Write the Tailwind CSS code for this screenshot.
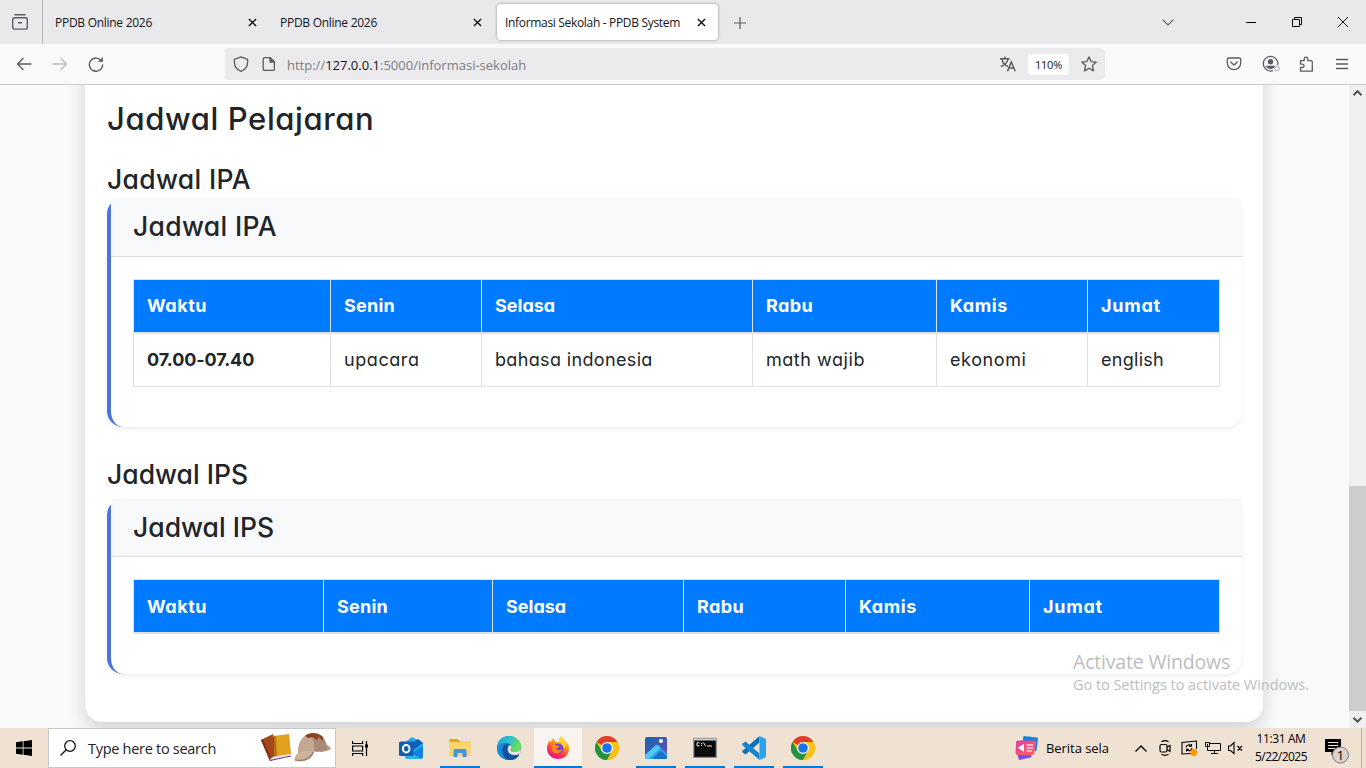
<!DOCTYPE html>
<html lang="id">
<head>
<meta charset="utf-8">
<title>Informasi Sekolah - PPDB System</title>
<script src="https://cdn.jsdelivr.net/npm/@tailwindcss/browser@4"></script>
</head>
<body class="flex h-[768px] w-[1366px] flex-col overflow-hidden bg-[#f8fafc] font-['Open_Sans',sans-serif] text-[#15141a]">

<svg class="hidden">
  <symbol id="close" viewBox="0 0 10 10"><path d="M1 1l8 8M9 1L1 9" fill="none" stroke="#15141a" stroke-width="1.6"/></symbol>
  <symbol id="chrome" viewBox="0 0 24 24">
    <circle cx="12" cy="12" r="12" fill="#fbc116"/>
    <path d="M12 12L1.6 6A12 12 0 0 1 22.4 6z" fill="#e33b2e"/>
    <path d="M1.6 6A12 12 0 0 0 12 24l5.2-9L12 12 6.8 15z" fill="#229342"/>
    <path d="M12 6h10.4A12 12 0 0 1 12 24l5.2-9z" fill="#fbc116"/>
    <circle cx="12" cy="12" r="6" fill="#fff"/><circle cx="12" cy="12" r="4.8" fill="#1a73e8"/>
  </symbol>
</svg>

<!-- Tab strip -->
<header class="flex h-11 shrink-0 items-center bg-[#e9e9eb] text-[12px]">
  <div class="flex h-11 w-[43px] items-center border-r border-[#b5b5b9] pl-3">
    <svg class="h-4 w-4" viewBox="0 0 16 16" fill="none" stroke="#5b5b66" stroke-width="1.4" stroke-linecap="round"><path d="M3 .8h10M6.5 8.8h3"/><rect x=".7" y="3.7" width="14.6" height="11.4" rx="1.8"/></svg>
  </div>
  <div class="flex w-[225px] items-center justify-between pl-3 pr-[11px]"><span class="pt-[2px] tracking-[-0.277px]">PPDB Online 2026</span><svg class="size-[9px]"><use href="#close"/></svg></div>
  <div class="flex w-[225px] items-center justify-between pl-3 pr-[11px]"><span class="pt-[2px] tracking-[-0.277px]">PPDB Online 2026</span><svg class="size-[9px]"><use href="#close"/></svg></div>
  <div class="ml-1 flex h-9 w-[221px] items-center justify-between rounded bg-white pl-2 pr-3 shadow-[0_0_3px_rgba(0,0,0,.4)]"><span class="pt-[2px] tracking-[-0.322px]">Informasi Sekolah - PPDB System</span><svg class="size-[9px]"><use href="#close"/></svg></div>
  <svg class="ml-4 mt-px h-3 w-3" viewBox="0 0 12 12"><path d="M6 0v12M0 6h12" stroke="#5b5b66" stroke-width="1.2"/></svg>
  <svg class="ml-auto h-[7px] w-3" viewBox="0 0 12 7"><path d="M.6.6L6 6l5.400-5.400" fill="none" stroke="#5b5b66" stroke-width="1.2"/></svg>
  <svg class="ml-[72px] h-px w-[10px]" viewBox="0 0 10 1"><path d="M0 .5h10" stroke="#000"/></svg>
  <svg class="ml-9 h-[10px] w-[10px]" viewBox="0 0 10 10" fill="none" stroke="#000"><path d="M.5 2.500h7v7h-7zM2.500 2.500v-2h7v7h-2"/></svg>
  <svg class="ml-9 mr-[18px] h-[10px] w-[10px]" viewBox="0 0 10 10"><path d="M0 0l10 10M10 0L0 10" stroke="#000" stroke-width=".9"/></svg>
</header>

<!-- Navigation toolbar -->
<nav class="z-10 flex h-[41px] shrink-0 items-center border-b border-[#cccccf] bg-[#f9f9fb]">
  <svg class="ml-4 h-4 w-4" viewBox="0 0 16 16" fill="none" stroke="#5b5b66" stroke-width="1.4" stroke-linecap="round" stroke-linejoin="round"><path d="M15 8H1.500M7 2.500L1.500 8 7 13.500"/></svg>
  <svg class="ml-5 h-4 w-4" viewBox="0 0 16 16" fill="none" stroke="#bdbdc2" stroke-width="1.400" stroke-linecap="round" stroke-linejoin="round"><path d="M1 8h13.500M9 2.500L14.500 8 9 13.500"/></svg>
  <svg class="ml-5 h-4 w-4" viewBox="0 0 16 16" fill="none" stroke="#5b5b66" stroke-width="1.400" stroke-linecap="round"><path d="M13.800 5.500A6.600 6.600 0 1 0 14.600 9"/><path d="M14.800 1v4.800H10z" fill="#5b5b66" stroke="none"/></svg>
  <div class="ml-[121px] flex h-8 w-[880px] items-center rounded bg-[#ebebed]">
    <svg class="ml-2 h-4 w-4" viewBox="0 0 16 16" fill="none" stroke="#5b5b66" stroke-width="1.300" stroke-linejoin="round"><path d="M8 .8l6.600 2.500v2.900c0 4-2.500 7.600-6.600 9.100C3.900 13.800 1.400 10.200 1.400 6.200V3.300z"/></svg>
    <svg class="ml-3 h-4 w-4" viewBox="0 0 16 16" fill="none" stroke="#5b5b66" stroke-width="1.300" stroke-linejoin="round"><path d="M3.700 1.700h5.500l4.200 4.200v7a1.500 1.500 0 0 1-1.500 1.500H3.700a1.500 1.500 0 0 1-1.500-1.500V3.200a1.500 1.500 0 0 1 1.500-1.500z"/><path d="M9 1.700V6h4.400z" fill="#5b5b66"/></svg>
    <span class="ml-[10px] pt-[3px] text-[13px] text-[#7d7d83]">http://<span class="text-[#15141a]">127.0.0.1</span>:5000/informasi-sekolah</span>
    <svg class="ml-auto h-4 w-4" viewBox="0 0 16 16" fill="none" stroke="#5b5b66" stroke-width="1.500"><path d="M0 2.700h9.600M4.800.5v2.200M2 3c.5 3.500 3.500 6.500 6 7.500M8 3C7.500 6.500 4 9.500.8 10.500"/><path d="M7.500 15.200L11.300 6l3.900 9.200M8.800 12h5.100"/></svg>
    <span class="ml-3 flex h-[21px] w-[41px] items-center justify-center rounded-[3px] bg-white pt-[2px] text-[11px] tracking-[-0.242px]">110%</span>
    <svg class="ml-3 mr-2 h-4 w-4" viewBox="0 0 16 16" fill="none" stroke="#5b5b66" stroke-width="1.300" stroke-linejoin="round"><path d="M8 .8l2.100 4.800 5.200.5-3.900 3.500 1.100 5.300L8 12.200l-4.500 2.700 1.100-5.300L.7 6.100l5.200-.5z"/></svg>
  </div>
  <svg class="ml-[121px] h-4 w-4" viewBox="0 0 16 16" fill="none" stroke="#5b5b66" stroke-width="1.300" stroke-linecap="round" stroke-linejoin="round"><path d="M2.500 2h11a1.200 1.200 0 0 1 1.200 1.200V7A6.700 6.700 0 0 1 1.300 7V3.200A1.200 1.200 0 0 1 2.500 2z"/><path d="M4.700 6L8 9l3.300-3"/></svg>
  <svg class="ml-5 h-[18px] w-[18px]" viewBox="0 0 18 18" fill="none"><path d="M15.800 10A7.300 7.300 0 1 0 11 15.600" stroke="#5b5b66" stroke-width="1.300"/><circle cx="8.500" cy="6.700" r="2.700" fill="#5b5b66"/><path d="M3.900 10.700h9.200c-.3 1.600-2.200 3.200-4.600 3.200s-4.300-1.600-4.600-3.200z" fill="#5b5b66"/><circle cx="15" cy="13.500" r="2.200" stroke="#b9b9be" stroke-width="1.200"/></svg>
  <svg class="ml-[18px] h-4 w-4" viewBox="0 0 16 16" fill="none" stroke="#5b5b66" stroke-width="1.300" stroke-linejoin="round"><path d="M2.500 4.700h3.700V3a1.800 1.800 0 0 1 3.600 0v1.700H13a1.300 1.300 0 0 1 1.300 1.300v9.200H2.500v-3.700h1.800a1.700 1.700 0 0 0 0-3.400H2.500z"/></svg>
  <svg class="ml-5 h-4 w-4" viewBox="0 0 16 16" stroke="#5b5b66" stroke-width="1.300"><path d="M2 3.500h12M2 8h12M2 12.500h12"/></svg>
</nav>

<!-- Page viewport -->
<main class="relative flex h-[643px] shrink-0 justify-between overflow-hidden bg-[#f8fafc] font-['Inter',sans-serif] text-[#212529] [font-feature-settings:'cv11']">
  <section class="-mt-10 ml-[85px] h-[677px] w-[1178px] rounded-b-[17px] bg-white px-[22px] pt-10 shadow-[0_9px_20px_rgba(0,0,0,.16)]">
    <h2 class="pt-[13px] text-[31px] leading-[41px] font-medium tracking-[0.6px]">Jadwal Pelajaran</h2>
    <h3 class="mt-[24px] h-[35px] text-[26.5px] leading-[32px] font-medium tracking-[0.32px]">Jadwal IPA</h3>

    <article class="h-[229px] w-[1135px] rounded-[16px] border-l-4 border-[#4e73df] bg-white shadow-[0_2px_4px_rgba(0,0,0,.075)]">
      <h3 class="h-[59px] rounded-t border-b border-[#d8dadd] bg-[#f8f9fb] pl-[22px] text-[26.5px] leading-[57px] font-medium tracking-[0.32px]">Jadwal IPA</h3>
      <div class="mt-[22px] ml-[22px] w-[1087px] border-r border-[#dee2e6] text-[18px]">
        <div class="grid h-[55px] grid-cols-[197px_151px_271px_184px_151px_132px] border-t border-b-2 border-[#dee2e6] bg-[#007bff] leading-[52px] font-bold text-white *:border-l *:border-[#dee2e6] *:pl-[13px]">
          <div class="tracking-[0.52px]">Waktu</div><div class="tracking-[0.25px]">Senin</div><div>Selasa</div><div class="tracking-[0.37px]">Rabu</div><div class="tracking-[0.6px]">Kamis</div><div class="tracking-[0.78px]">Jumat</div>
        </div>
        <div class="grid h-[53px] grid-cols-[197px_151px_271px_184px_151px_132px] border-b border-[#dee2e6] leading-[52px] *:border-l *:border-[#dee2e6] *:pl-[13px]">
          <div class="font-bold tracking-[-0.12px]">07.00-07.40</div><div class="tracking-[0.57px]">upacara</div><div class="tracking-[0.35px]">bahasa indonesia</div><div class="tracking-[0.54px]">math wajib</div><div class="tracking-[0.6px]">ekonomi</div><div class="tracking-[0.28px]">english</div>
        </div>
      </div>
    </article>

    <h3 class="mt-[31px] h-[41px] text-[26.5px] leading-[32px] font-medium tracking-[0.02px]">Jadwal IPS</h3>
    <article class="h-[175px] w-[1135px] rounded-[16px] border-l-4 border-[#4e73df] bg-white shadow-[0_2px_4px_rgba(0,0,0,.075)]">
      <h3 class="h-[58px] rounded-t border-b border-[#d8dadd] bg-[#f8f9fb] pl-[22px] text-[26.5px] leading-[57px] font-medium tracking-[0.02px]">Jadwal IPS</h3>
      <div class="mt-[22px] ml-[22px] w-[1087px] border-r border-[#dee2e6] text-[18px]">
        <div class="grid h-[55px] grid-cols-[190px_169px_191px_162px_184px_190px] border-t border-b-2 border-[#dee2e6] bg-[#007bff] leading-[54px] font-bold text-white *:border-l *:border-[#dee2e6] *:pl-[13px]">
          <div class="tracking-[0.52px]">Waktu</div><div class="tracking-[0.25px]">Senin</div><div>Selasa</div><div class="tracking-[0.37px]">Rabu</div><div class="tracking-[0.6px]">Kamis</div><div class="tracking-[0.78px]">Jumat</div>
        </div>
      </div>
    </article>
  </section>

  <!-- Scrollbar -->
  <aside class="flex w-[17px] flex-col bg-[#f0f0f0]">
    <svg class="h-[17px] w-[17px]" viewBox="0 0 17 17"><path d="M4.500 10.200l4-4 4 4" fill="none" stroke="#505050" stroke-width="2"/></svg>
    <div class="mt-[384px] h-[225px] bg-[#cdcdcd]"></div>
    <svg class="h-[17px] w-[17px]" viewBox="0 0 17 17"><path d="M4.500 6.700l4 4 4-4" fill="none" stroke="#505050" stroke-width="2"/></svg>
  </aside>

  <!-- Activation watermark -->
  <div class="absolute top-[563px] left-[1073px] font-['Open_Sans',sans-serif] whitespace-nowrap text-[#bcbdbf]">
    <p class="text-[19.5px] leading-[27px] tracking-[-0.19px]">Activate Windows</p>
    <p class="pt-px text-[14.5px] leading-[18px] tracking-[-0.046px]">Go to Settings to activate Windows.</p>
  </div>
</main>

<!-- Taskbar -->
<footer class="flex h-10 shrink-0 items-center bg-[#f0e2d3] text-black">
  <svg class="ml-4 h-4 w-4" viewBox="0 0 16 16"><path d="M0 2.300L6.700 1.300v6.300H0zM7.500 1.200L16 0v7.600H7.500zM0 8.400h6.700v6.300L0 13.700zM7.500 8.400H16V16l-8.500-1.200z"/></svg>
  <div class="ml-4 flex h-10 w-[288px] items-center border border-[#c6c8ca] bg-white">
    <svg class="ml-[11px] h-4 w-4" viewBox="0 0 16 16" fill="none" stroke="#111" stroke-width="1.300"><circle cx="10" cy="6" r="5.300"/><path d="M6.200 9.800L.5 15.500"/></svg>
    <span class="ml-3 pt-[2px] text-[14.5px] tracking-[-0.286px] text-[#222]">Type here to search</span>
    <svg class="ml-auto mr-[3px] h-[32px] w-[72px]" viewBox="0 0 72 32">
      <path d="M1 8l12-6 6 23-9 4z" fill="#a4481c"/><path d="M1 8l2-1 9 21-2 1z" fill="#7d3312"/>
      <path d="M14 4l15-2 2 20-17 3z" fill="#e0a11f"/><path d="M14 4l2-.3 1 20.300-3 1z" fill="#b07615"/>
      <path d="M10 27l4-2.500 17-2.500v2l-20 4.500z" fill="#e8e0f0"/><path d="M10 28.500l21-4.500" stroke="#6d3b86" stroke-width="1"/>
      <path d="M60 20c4-1 8-1 11-3 0-2-3-4-5-4z" fill="#bda18c"/>
      <path d="M38 22C38 9 44 1.500 53 1.500c9 0 14 6.500 14.500 16.500-4 2-9 2-13.500 1.500-6-1.500-11 0-16 2.500z" fill="#a88a75"/>
      <path d="M38 22C38 10 42 4 49 3c5 4 6.500 10 5 16.500-6-1.500-11 0-16 2.500z" fill="#c2a793"/>
      <path d="M38 21c5-2.500 11-3 16-1.500-1 7-9 11.500-18 9.500-3-2-1-5 2-8z" fill="#cdb3a0"/>
      <path d="M35 28c8 1.500 15-1 18.500-8" fill="none" stroke="#94735e" stroke-width="1.200"/>
      <path d="M45 3.500c5-3.500 13-3.500 18 1.500v4l-4-4-2 3-4-3-5 1z" fill="#8a431c"/>
    </svg>
  </div>
  <svg class="ml-[15px] h-[15px] w-[18px]" viewBox="0 0 18 15" fill="none" stroke="#000" stroke-width="1.200"><path d="M1.600 0v2.500h10V0M1.600 15v-2.500h10V15M1.600 5h10v5h-10zM15.500 0v15"/><path d="M14 3.500h3v3h-3z" fill="#000" stroke="none"/></svg>

  <div class="ml-[18px] flex h-10 gap-[1px] *:flex *:h-10 *:w-12 *:items-center *:justify-center">
    <div>
      <svg class="h-6 w-6" viewBox="0 0 24 24"><path d="M4 8L13 1l11 6v6L14 18z" fill="#28a8ea"/><path d="M11 8l8-5 5 4-11 8z" fill="#0a62b8"/><path d="M6 13l8 3 10-6v10a3 3 0 0 1-3 3H8a2 2 0 0 1-2-2z" fill="#23b5ee"/><path d="M24 10v10a3 3 0 0 1-2 3L13 17z" fill="#1183dc"/><rect y="5.500" width="14.500" height="14.500" rx="1.500" fill="#0f5fb5"/><ellipse cx="7.200" cy="12.700" rx="3.300" ry="3.700" fill="none" stroke="#fff" stroke-width="2"/></svg>
    </div>
    <div class="relative">
      <svg class="h-6 w-6" viewBox="0 0 24 24"><path d="M1.500 3h8l2 2h11v5h-21z" fill="#e8a313"/><path d="M1.500 6h10l1.500-1h9.500v15h-21z" fill="#fcd56a"/><path d="M5.500 21v-6.500a1.500 1.500 0 0 1 1.500-1.500h10a1.500 1.500 0 0 1 1.500 1.500V21h-4v-4h-5v4z" fill="#3d95dc"/></svg>
      <i class="absolute bottom-0 left-1 h-[2px] w-10 bg-[#0078d4]"></i>
    </div>
    <div>
      <svg class="h-6 w-6" viewBox="0 0 24 24"><defs><linearGradient id="eg" x1="0" y1="0" x2="1" y2=".4"><stop offset="0" stop-color="#159fe0"/><stop offset=".55" stop-color="#2fc3c8"/><stop offset="1" stop-color="#6be052"/></linearGradient></defs><circle cx="12" cy="12" r="12" fill="#0f6cbd"/><path d="M0 12C0 5 5 0 12 0s12 5 12 10.500c0 3.500-2.500 5.500-6 5.500-3 0-4.500-1-4.500-2 0-.8 1-1.500 1-3C14.500 8.500 12 7 9 7c-4 0-8 2-9 5z" fill="url(#eg)"/><path d="M0 12c1-3.500 5-5 9-5-3 1.500-4.500 5-3.500 9 1 4 4 7 7 8C5 24 0 19 0 12z" fill="#1b8bd8"/><path d="M12 9c-3 2-3 7 .5 9.500 3 2 7 1.500 10 .3C20 23 16 24.500 12 24c-4-1-6.500-5-6.500-9S9 8 12 9z" fill="#10529c"/><path d="M14.500 11c0 1.500-1 2.200-1 3 0 1 1.500 2 4.500 2 2.500 0 4.600-1 5.500-3 .5 2 0 4-1 5-3 1.300-6.500 1.500-9.500-.3-2.500-1.700-3-6-1-8 1.500-1 2.500.300 2.500 1.300z" fill="#f0e2d3"/></svg>
    </div>
    <div class="relative bg-[#f9f4ef]">
      <svg class="h-6 w-6" viewBox="0 0 24 24"><defs><linearGradient id="ff" x1=".8" y1="0" x2=".3" y2="1"><stop offset="0" stop-color="#fff44f"/><stop offset=".4" stop-color="#ff980e"/><stop offset=".7" stop-color="#ff3647"/><stop offset="1" stop-color="#e31587"/></linearGradient></defs><path d="M23 13.500C22.500 19 18 23 12 23S1 18.500 1 12.500C1 9 2.200 6.500 3.800 4.200c.1 1 .3 1.800.8 2.300C5.300 4.300 6.700 3 8 2c0 1.700.6 3 1.800 3.800L13 6c-.5-3 .8-5 3-6 .3 2.500 2 3.500 3.500 5 1.500 1.500 2.300 3 2.400 4.300l.5-1c.6 1.700.8 3.500.6 5.200z" fill="url(#ff)"/><circle cx="12" cy="12.700" r="5.300" fill="#7a3fe0"/><path d="M5.500 9.500c2-1.500 4-1.200 5.500.3 1 .200 1.800.300 2.400.400-.2 1.500-2.600 1.500-3.200 2.500.8 2 4.300 1.800 5.800.3-.5 3.500-3.500 5-6.200 4.300C6.500 16.300 4.500 13 5.500 9.500z" fill="#ff8a16"/><path d="M13 6c3 .5 5 3 4.800 6.500 1.500-1 2.200-3 1.700-5-1-2.500-3.500-3.500-3.500-7.500-2.200 1-3.500 3-3 6z" fill="#ffd835"/></svg>
      <i class="absolute bottom-0 left-0 h-[2px] w-12 bg-[#0078d4]"></i>
    </div>
    <div><svg class="h-6 w-6"><use href="#chrome"/></svg></div>
    <div class="relative">
      <svg class="h-6 w-6" viewBox="0 0 24 24"><defs><linearGradient id="ph" x1="0" y1="0" x2="1" y2="1"><stop offset="0" stop-color="#1766b4"/><stop offset="1" stop-color="#6d4bb0"/></linearGradient></defs><rect x="1" y="1" width="22" height="22" rx="2" fill="url(#ph)"/><path d="M1 19L11.500 9.500a2 2 0 0 1 2.700 0L23 18v3a2 2 0 0 1-2 2H3a2 2 0 0 1-2-2z" fill="#2ba6ef"/><path d="M1 19L11.500 9.500c1-.8 2-.8 2.800.1l2.200 2.200L4.500 23H3a2 2 0 0 1-2-2z" fill="#4cc9f7"/><path d="M8 23l7.500-7.500a1.800 1.800 0 0 1 2.500 0L23 20.500a2 2 0 0 1-2 2.500z" fill="#1672d0"/><circle cx="17" cy="5" r="2" fill="#fff"/></svg>
      <i class="absolute bottom-0 left-1 h-[2px] w-10 bg-[#0078d4]"></i>
    </div>
    <div class="relative">
      <svg class="h-6 w-6" viewBox="0 0 24 24"><rect x=".8" y="2.300" width="22.400" height="19" fill="#0a0a0a" stroke="#84898c" stroke-width="1"/><path d="M1 2.500h22v2H1z" fill="#c7cdd1"/><path d="M6.500 6.800H4v3h2.500M8 7.500h1v.8M8 9.500h1M10.500 6.500l2 3.500M14 10h5" fill="none" stroke="#e5e5e5" stroke-width="1"/></svg>
      <i class="absolute bottom-0 left-1 h-[2px] w-10 bg-[#0078d4]"></i>
    </div>
    <div class="relative">
      <svg class="h-6 w-6" viewBox="0 0 24 24"><path d="M17.500 0v6.500L3.500 18.500.3 16.300V15z" fill="#0a70b8"/><path d="M.3 7.700l3.200-2.200 14 12V24L.3 9.200z" fill="#1485d0"/><path d="M17.500 0L24 3v18l-6.500 3z" fill="#2ba3ee"/></svg>
      <i class="absolute bottom-0 left-1 h-[2px] w-10 bg-[#0078d4]"></i>
    </div>
    <div class="relative"><svg class="h-6 w-6"><use href="#chrome"/></svg><i class="absolute bottom-0 left-1 h-[2px] w-10 bg-[#0078d4]"></i></div>
  </div>

  <svg class="ml-auto h-6 w-6" viewBox="0 0 24 24"><defs><linearGradient id="nw" x1="0" y1="0" x2="1" y2="1"><stop offset="0" stop-color="#d9409e"/><stop offset="1" stop-color="#ff6668"/></linearGradient></defs><path d="M9.500 0l13.500 1.500a1 1 0 0 1 1 1L22.500 15 7 13z" fill="#1683e0"/><path d="M2 14l16 4-1 3.500L5 24z" fill="#7950e8"/><path d="M4 4.500h16a2 2 0 0 1 2 2L20.500 17a2 2 0 0 1-2 2H3.500a2 2 0 0 1-2-2L2 6.500a2 2 0 0 1 2-2z" fill="url(#nw)"/><path d="M4 11.800l6-4v8z" fill="#fff"/><path d="M12.500 9H19M12.500 12H19M12.500 15H18" stroke="#ffd0dc" stroke-width="1.300"/></svg>
  <span class="ml-2 w-[64px] pt-px text-[13px] tracking-[-0.048px] whitespace-nowrap">Berita sela</span>
  <svg class="ml-[25px] h-[7px] w-3" viewBox="0 0 12 7"><path d="M.5 6.500L6 1l5.500 5.500" fill="none" stroke="#000" stroke-width="1.400"/></svg>
  <svg class="ml-3 h-4 w-3" viewBox="0 0 12 16" fill="none" stroke="#000" stroke-width="1.200"><path d="M2.500 1.700c2-1.200 5-1.200 7 0M2.500 14.300c2 1.200 5 1.200 7 0"/><rect x="1" y="4.500" width="7" height="7.500" rx="1.500"/><path d="M8 7l3-1.500v6L8 9.500"/></svg>
  <svg class="ml-[10px] h-4 w-[17px]" viewBox="0 0 17 16" fill="none" stroke="#000" stroke-width="1.100"><path d="M10 13.500L1 14V2.500L15.500 1v8M5 7.500A3 3 0 0 1 10.300 6M10.500 4v2.300H8M11 8a3 3 0 0 1-5.300 1.700M5.500 11.500V9.300H8"/><circle cx="12.700" cy="12.500" r="3.500" fill="#ff9800" stroke="none"/></svg>
  <svg class="ml-[7px] h-4 w-4" viewBox="0 0 16 16" fill="none" stroke="#000"><path d="M5 3.500h10.500v7H2.500V7M9.500 10.500v3M6 13.500h7M.5 2.500h4v4h-4zM2.500 4v4"/></svg>
  <svg class="ml-[7px] h-4 w-4" viewBox="0 0 16 16" fill="none" stroke="#000" stroke-width="1.100"><path d="M.5 6v4.500H2.500L6 13.500v-11L2.500 6zM9.500 6l4.500 4.500M14 6l-4.500 4.500"/></svg>
  <div class="ml-[10px] w-[54px] text-center text-[12px] leading-[18px] whitespace-nowrap"><p class="tracking-[-0.389px]">11:31 AM</p><p class="tracking-[-0.538px]">5/22/2025</p></div>
  <svg class="mt-[5px] ml-[17px] h-[26px] w-[25px]" viewBox="0 0 25 26"><path d="M0 1h16v13h-6l-3.500 3.500V14H0z" fill="#000"/><path d="M3 4.500h10M3 7.500h10M3 10.500h7" stroke="#f0e2d3" stroke-width="1"/><circle cx="15.500" cy="17" r="8" fill="#d9d3ce" stroke="#7e7b78" stroke-width="1"/><text x="15.500" y="21.500" text-anchor="middle" class="font-['Open_Sans'] text-[13px]">1</text></svg>
  <div class="ml-[11px] h-10 w-[5px] border-l border-[#b9aea3]"></div>
</footer>
</body>
</html>
